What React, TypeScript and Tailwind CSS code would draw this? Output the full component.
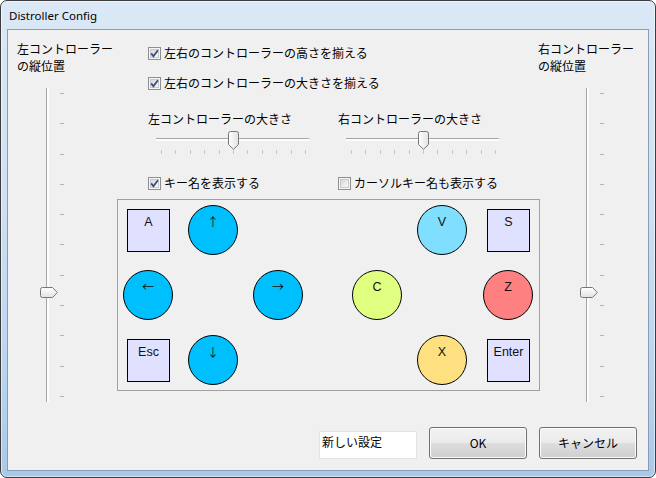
import React from "react";

const jp = "font-['Noto_Sans_CJK_JP',sans-serif]";

type KeyDef = { label: string; x: number; y: number; round: boolean; color: string };

const keys: KeyDef[] = [
  { label: "A", x: 9, y: 9, round: false, color: "bg-[#e0e0ff]" },
  { label: "↑", x: 70, y: 5, round: true, color: "bg-[#00bfff]" },
  { label: "←", x: 5, y: 70, round: true, color: "bg-[#00bfff]" },
  { label: "→", x: 135, y: 70, round: true, color: "bg-[#00bfff]" },
  { label: "Esc", x: 9, y: 139, round: false, color: "bg-[#e0e0ff]" },
  { label: "↓", x: 70, y: 135, round: true, color: "bg-[#00bfff]" },
  { label: "V", x: 299, y: 5, round: true, color: "bg-[#80dfff]" },
  { label: "S", x: 369, y: 9, round: false, color: "bg-[#e0e0ff]" },
  { label: "C", x: 234, y: 70, round: true, color: "bg-[#e0ff80]" },
  { label: "Z", x: 365, y: 70, round: true, color: "bg-[#ff8080]" },
  { label: "X", x: 299, y: 135, round: true, color: "bg-[#ffe080]" },
  { label: "Enter", x: 369, y: 139, round: false, color: "bg-[#e0e0ff]" },
];

function CheckBox({ checked }: { checked: boolean }) {
  return (
    <svg width="13" height="13" viewBox="0 0 13 13" className="shrink-0">
      <defs>
        <linearGradient id="cbfill" x1="0" y1="0" x2="1" y2="1">
          <stop offset="0" stopColor="#d6d6d6" />
          <stop offset="1" stopColor="#fbfbfb" />
        </linearGradient>
      </defs>
      <rect x="0.5" y="0.5" width="12" height="12" fill="#f6f6f6" stroke="#8e8f8f" />
      <rect x="2.5" y="2.5" width="8" height="8" fill="url(#cbfill)" stroke="#c9c9c9" />
      {checked && (
        <path d="M3.2 6.4 L5.4 9.2 L9.9 3.2" fill="none" stroke="#3a4b86" strokeWidth="1.8" />
      )}
    </svg>
  );
}

function CheckRow({ checked, label }: { checked: boolean; label: string }) {
  return (
    <div className="flex h-[18px] items-center gap-[3px]">
      <CheckBox checked={checked} />
      <span className={`${jp} text-[12px] leading-[18px] text-black`}>{label}</span>
    </div>
  );
}

function HThumb() {
  return (
    <svg width="11" height="19" viewBox="0 0 11 19">
      <defs>
        <linearGradient id="hth" x1="0" y1="0" x2="1" y2="0">
          <stop offset="0" stopColor="#ffffff" />
          <stop offset="1" stopColor="#e2e2e2" />
        </linearGradient>
      </defs>
      <path
        d="M0.5 2.5 Q0.5 0.5 2.5 0.5 H8.5 Q10.5 0.5 10.5 2.5 V13.5 L5.5 18.3 L0.5 13.5 Z"
        fill="url(#hth)"
        stroke="#767676"
      />
    </svg>
  );
}

function VThumb() {
  return (
    <svg width="18" height="11" viewBox="0 0 18 11">
      <defs>
        <linearGradient id="vth" x1="0" y1="0" x2="0" y2="1">
          <stop offset="0" stopColor="#ffffff" />
          <stop offset="1" stopColor="#e2e2e2" />
        </linearGradient>
      </defs>
      <path
        d="M2.5 0.5 H12.5 L17.3 5.5 L12.5 10.5 H2.5 Q0.5 10.5 0.5 8.5 V2.5 Q0.5 0.5 2.5 0.5 Z"
        fill="url(#vth)"
        stroke="#767676"
      />
    </svg>
  );
}

function HSlider() {
  return (
    <div className="relative h-[28px] w-[190px]">
      <div className="absolute left-[8px] top-[10px] h-[3px] w-[153px] border-t border-[#a6a6a6] bg-[#fdfdfd]" />
      <div className="absolute left-[13px] top-[22px] flex w-[145px] justify-between">
        {Array.from({ length: 11 }).map((_, i) => (
          <div key={i} className="h-[4px] w-px bg-[#c6c6c6]" />
        ))}
      </div>
      <div className="absolute left-[80px] top-[3px]">
        <HThumb />
      </div>
    </div>
  );
}

function VSlider() {
  return (
    <div className="relative h-[314px] w-[40px]">
      <div className="absolute left-[6px] top-0 h-full w-[3px] border-l border-[#a6a6a6] bg-[#fdfdfd]" />
      <div className="absolute left-[20px] top-[5px] flex h-[304px] flex-col justify-between">
        {Array.from({ length: 11 }).map((_, i) => (
          <div key={i} className="h-px w-[4px] bg-[#b4b4b4]" />
        ))}
      </div>
      <div className="absolute left-0 top-[199px]">
        <VThumb />
      </div>
    </div>
  );
}

function Key({ k }: { k: KeyDef }) {
  const shape = k.round
    ? "h-[50px] w-[50px] rounded-full pt-[8px]"
    : "h-[43px] w-[43px] pt-[4px]";
  const font = k.label.length === 1 && /[A-Z]/.test(k.label)
    ? "font-['Liberation_Sans',sans-serif] text-[12.5px]"
    : k.label.length > 1
      ? "font-['Liberation_Sans',sans-serif] text-[12.5px]"
      : `${jp} text-[12px]`;
  return (
    <div
      className={`absolute border border-black text-center leading-[16px] text-[#111] ${shape} ${k.color} ${font}`}
      style={{ left: k.x, top: k.y }}
    >
      {k.label}
    </div>
  );
}

function Button({ label, latin }: { label: string; latin?: boolean }) {
  return (
    <button
      className={`h-[32px] w-[98px] rounded-[3px] border border-[#707070] bg-[linear-gradient(#f2f2f2_0%,#ebebeb_48%,#dddddd_52%,#cfcfcf_100%)] shadow-[inset_0_0_0_1px_#fbfbfb] text-[12px] text-black ${jp} ${latin ? "" : ""}`}
    >
      {label}
    </button>
  );
}

export default function App() {
  return (
    <div className="h-[478px] w-[656px] bg-white">
      <div className="flex h-[478px] w-[656px] flex-col overflow-hidden rounded-[7px] border border-[#3c3c3c] bg-[linear-gradient(#dbe8f6_0%,#cfe1f4_40%,#bcd5ef_75%,#a9c9ea_100%)] shadow-[inset_0_0_0_1px_rgba(255,255,255,0.55)]">
        {/* title bar */}
        <div className="flex h-[28px] items-center pl-[8px] pt-[1px]">
          <span className="font-['Noto_Sans',sans-serif] text-[11.5px] text-black">
            Distroller Config
          </span>
        </div>

        {/* client area */}
        <div className="mx-[6px] flex h-[442px] flex-col border border-[#8a9cb3] bg-[#f0f0f0]">
          <div className="flex h-[397px]">
            {/* left vertical slider */}
            <div className="w-[109px] pl-[9px] pt-[10px]">
              <div className={`${jp} text-[12px] leading-[17px] text-black`}>
                <div>左コントローラー</div>
                <div>の縦位置</div>
              </div>
              <div className="ml-[23px] mt-[14px]">
                <VSlider />
              </div>
            </div>

            {/* middle */}
            <div className="flex w-[423px] flex-col pt-[14px]">
              <div className="pl-[31px]">
                <CheckRow checked label="左右のコントローラーの高さを揃える" />
              </div>
              <div className="mt-[12px] pl-[31px]">
                <CheckRow checked label="左右のコントローラーの大きさを揃える" />
              </div>
              <div className="mt-[18px] flex pl-[31px]">
                <div className="w-[190px]">
                  <div className={`${jp} h-[18px] text-[12px] leading-[18px] text-black`}>
                    左コントローラーの大きさ
                  </div>
                  <HSlider />
                </div>
                <div className="w-[190px]">
                  <div className={`${jp} h-[18px] text-[12px] leading-[18px] text-black`}>
                    右コントローラーの大きさ
                  </div>
                  <HSlider />
                </div>
              </div>
              <div className="mt-[18px] flex pl-[31px]">
                <div className="w-[190px]">
                  <CheckRow checked label="キー名を表示する" />
                </div>
                <div className="w-[190px]">
                  <CheckRow checked={false} label="カーソルキー名も表示する" />
                </div>
              </div>
              <div className="relative mt-[7px] h-[192px] w-[423px] border border-[#a0a0a0]">
                {keys.map((k) => (
                  <Key key={k.label} k={k} />
                ))}
              </div>
            </div>

            {/* right vertical slider */}
            <div className="flex-1 pt-[10px]">
              <div className={`${jp} -ml-[2px] text-[12px] leading-[17px] text-black`}>
                <div>右コントローラー</div>
                <div>の縦位置</div>
              </div>
              <div className="ml-[40px] mt-[14px]">
                <VSlider />
              </div>
            </div>
          </div>

          {/* bottom buttons */}
          <div className="flex h-[32px] items-end justify-end gap-[12px] pr-[11px]">
            <div className={`${jp} h-[28px] w-[98px] border border-[#e2e3e6] bg-white pl-[2px] pt-[1px] text-[12px] leading-[18px] text-black`}>
              新しい設定
            </div>
            <Button label="OK" latin />
            <Button label="キャンセル" />
          </div>
        </div>
      </div>
    </div>
  );
}
